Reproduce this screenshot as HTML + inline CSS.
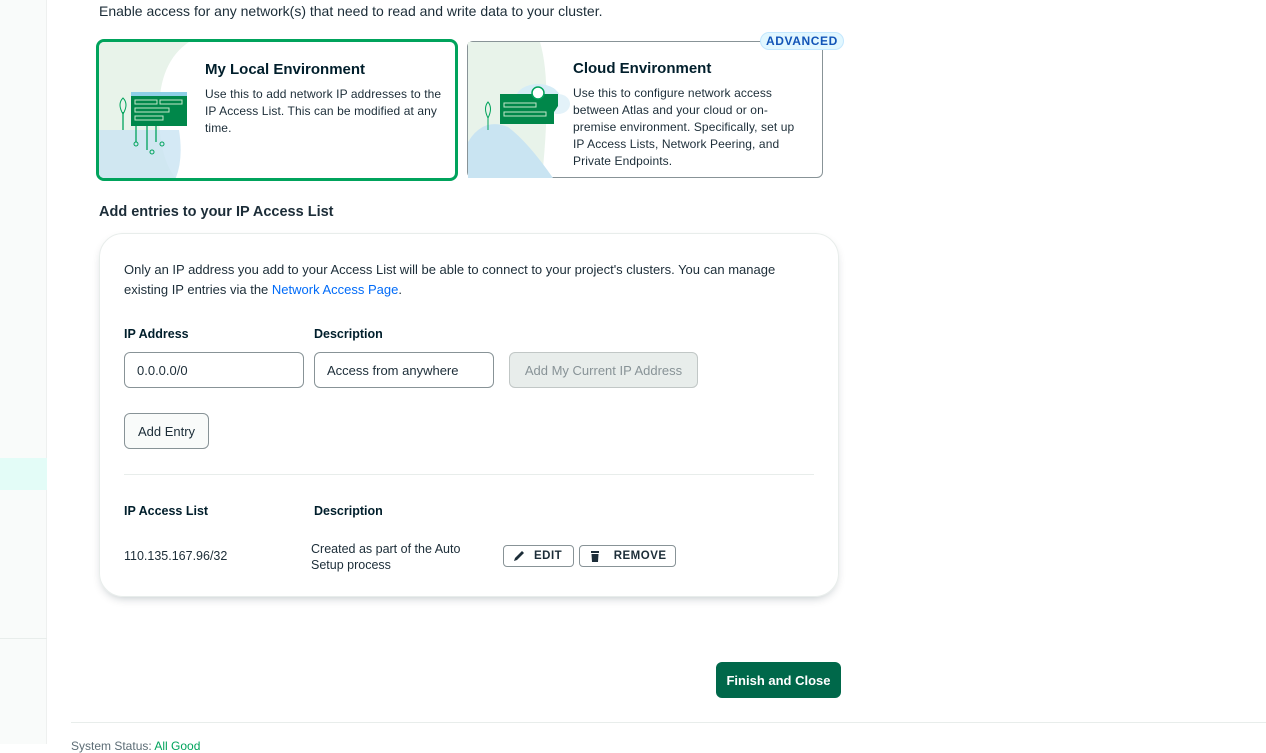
<!DOCTYPE html>
<html><head><meta charset="utf-8"><style>
*{box-sizing:border-box;margin:0;padding:0}
body{width:1266px;height:744px;overflow:hidden;background:#fff;font-family:"Liberation Sans",sans-serif;color:#1c2d38;position:relative}
.side{position:absolute;left:0;top:0;width:47px;height:744px;background:#f9fbfa;border-right:1px solid #eef0ef}
.abs{position:absolute}
.card{position:absolute;border-radius:6px;background:#fff;overflow:hidden}
.card h3{position:absolute;font-size:15px;font-weight:bold;color:#001e2b}
.card p{position:absolute;font-size:12px;line-height:17px;color:#1c2d38;letter-spacing:.1px}
.lbl{font-size:12.5px;font-weight:bold;color:#001e2b;position:absolute}
.inp{position:absolute;height:36px;border:1px solid #889397;border-radius:6px;font-size:13px;padding:10px 12px;color:#1c2d38}
.btn{position:absolute;border:1px solid #889397;border-radius:6px;font-size:13px;display:flex;align-items:center;justify-content:center}
.sm{position:absolute;height:22px;border:1px solid #889397;border-radius:4px;font-size:11.5px;font-weight:bold;display:flex;align-items:center;gap:8px;padding:0 8px;letter-spacing:.5px}
</style></head><body>
<div class="side"></div>
<div class="abs" style="left:0;top:458px;width:47px;height:32px;background:#e3fcf7"></div>
<div class="abs" style="left:0;top:638px;width:47px;height:1px;background:#e8edeb"></div>
<div class="abs" style="left:99px;top:3px;font-size:14px;color:#1c2d38">Enable access for any network(s) that need to read and write data to your cluster.</div>

<div class="card" style="left:96px;top:39px;width:362px;height:142px;border:3px solid #00a35c;border-radius:8px">
<svg class="abs" style="left:0;top:0" width="110" height="140"><path d="M0 0H90Q60 20 60 70Q60 120 80 140H0Z" fill="#e8f3ea"/><path d="M0 88H80Q85 120 75 140H0Z" fill="#c9e4f2" opacity=".8"/>
<rect x="32" y="50" width="56" height="34" fill="#00874a"/><rect x="32" y="50" width="56" height="4" fill="#8ecfe6"/>
<rect x="36" y="58" width="22" height="4" fill="none" stroke="#c3e7ca"/><rect x="61" y="58" width="22" height="4" fill="none" stroke="#c3e7ca"/><rect x="36" y="66" width="34" height="4" fill="none" stroke="#c3e7ca"/><rect x="36" y="74" width="28" height="4" fill="none" stroke="#c3e7ca"/>
<path d="M24 70V88M37 84V100M48 84V108M57 84V100" stroke="#00a35c" stroke-width="1.3" fill="none"/><circle cx="37" cy="102" r="2" fill="none" stroke="#00a35c"/><circle cx="53" cy="110" r="2" fill="none" stroke="#00a35c"/><circle cx="63" cy="102" r="2" fill="none" stroke="#00a35c"/><path d="M24 72Q18 62 24 56Q30 62 24 72" fill="none" stroke="#00a35c"/></svg>
<h3 style="left:106px;top:19px">My Local Environment</h3>
<p style="left:106px;top:44px;width:238px">Use this to add network IP addresses to the IP Access List. This can be modified at any time.</p>
</div>

<div class="card" style="left:467px;top:41px;width:356px;height:137px;border:1px solid #889397;overflow:visible">
<svg class="abs" style="left:0;top:0" width="110" height="136"><path d="M0 0H72Q84 40 74 136H0Z" fill="#e8f3ea"/>
<ellipse cx="70" cy="56" rx="22" ry="14" fill="#d5ecf6"/><ellipse cx="90" cy="62" rx="12" ry="10" fill="#e3f2f9"/>
<path d="M32 52H90V64L86 70V82H32Z" fill="#00874a"/><rect x="36" y="61" width="32" height="4" fill="none" stroke="#c3e7ca"/><rect x="36" y="70" width="42" height="4" fill="none" stroke="#c3e7ca"/>
<circle cx="70" cy="51" r="6" fill="#fff" stroke="#00a35c" stroke-width="1.5"/>
<path d="M0 100Q15 75 40 85Q60 100 85 136H0Z" fill="#c9e4f2"/>
<path d="M20 75V88M20 76Q15 66 20 60Q25 66 20 76" stroke="#00a35c" fill="none"/></svg>
<h3 style="left:105px;top:18px">Cloud Environment</h3>
<p style="left:105px;top:43px;width:235px">Use this to configure network access between Atlas and your cloud or on-premise environment. Specifically, set up IP Access Lists, Network Peering, and Private Endpoints.</p>
<div class="abs" style="left:292px;top:-10px;height:18px;padding:0 5px;background:#e1f7ff;border:1px solid #c3e7fe;border-radius:9px;color:#1254b7;font-size:12px;font-weight:bold;letter-spacing:.6px;line-height:16px">ADVANCED</div>
</div>

<div class="abs" style="left:99px;top:204px;font-size:14.5px;font-weight:bold;color:#1c2d38">Add entries to your IP Access List</div>

<div class="abs" style="left:99px;top:233px;width:740px;height:364px;border:1px solid #e8edeb;border-radius:24px;box-shadow:0 4px 10px -4px rgba(0,30,43,.3)">
<div class="abs" style="left:24px;top:26px;width:670px;font-size:13px;line-height:20px">Only an IP address you add to your Access List will be able to connect to your project's clusters. You can manage existing IP entries via the <span style="color:#016bf8">Network Access Page</span>.</div>
<div class="lbl" style="left:24px;top:93px">IP Address</div>
<div class="lbl" style="left:214px;top:93px">Description</div>
<div class="inp" style="left:24px;top:118px;width:180px">0.0.0.0/0</div>
<div class="inp" style="left:214px;top:118px;width:180px">Access from anywhere</div>
<div class="btn" style="left:409px;top:118px;width:189px;height:36px;background:#e8edeb;border-color:#c1c7c6;color:#889397">Add My Current IP Address</div>
<div class="btn" style="left:24px;top:179px;width:85px;height:36px;background:#f9fbfa">Add Entry</div>
<div class="abs" style="left:24px;top:240px;width:690px;height:1px;background:#e8edeb"></div>
<div class="lbl" style="left:24px;top:270px">IP Access List</div>
<div class="lbl" style="left:214px;top:270px">Description</div>
<div class="abs" style="left:24px;top:315px;font-size:12.5px">110.135.167.96/32</div>
<div class="abs" style="left:211px;top:307px;font-size:12.5px;line-height:16px;width:180px">Created as part of the Auto Setup process</div>
<div class="sm" style="left:403px;top:311px;width:71px"><svg width="14" height="14"><path d="M2 12L3 9L10 2L12 4L5 11Z" fill="#1c2d38"/></svg>EDIT</div>
<div class="sm" style="left:479px;top:311px;width:97px"><svg width="14" height="14"><path d="M3 2H11V4H3ZM3.5 5H10.5L10 13H4Z" fill="#1c2d38"/></svg>&nbsp;REMOVE</div>
</div>

<div class="abs" style="left:716px;top:662px;width:125px;height:36px;background:#00684a;border-radius:6px;color:#fff;font-size:13px;font-weight:bold;display:flex;align-items:center;justify-content:center">Finish and Close</div>
<div class="abs" style="left:71px;top:722px;width:1195px;height:1px;background:#e8edeb"></div>
<div class="abs" style="left:71px;top:739px;font-size:12px;color:#5c6c75">System Status: <span style="color:#00a35c">All Good</span></div>
</body></html>
